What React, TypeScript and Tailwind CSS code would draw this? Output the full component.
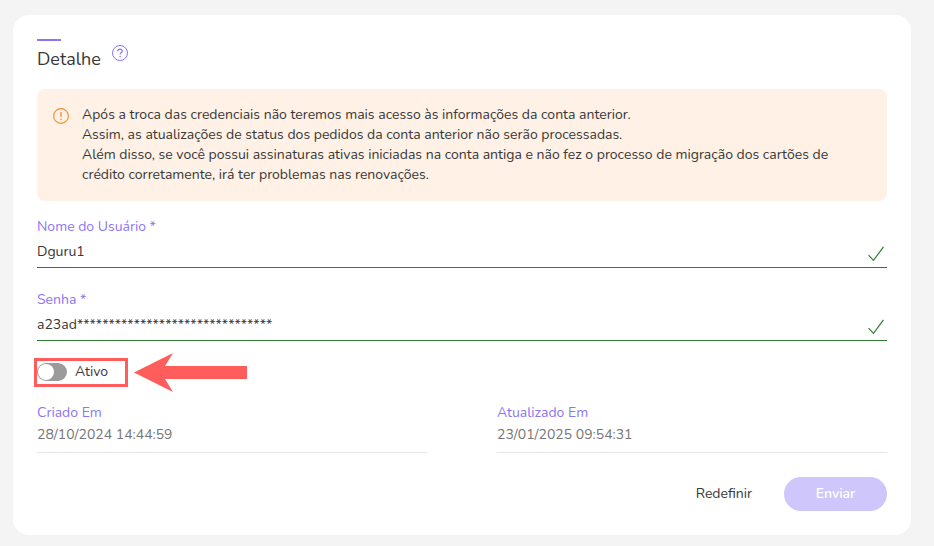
import { useState } from 'react';

interface TextFieldProps {
  id: string;
  label: string;
  value: string;
  onChange: (value: string) => void;
}

function CheckMark() {
  return (
    <svg className="h-4 w-4 shrink-0" viewBox="0 0 16 16" fill="none" stroke="#2e7d32" aria-hidden="true">
      <path d="M0.5 9.2L5.5 14.4L15.5 0.8" strokeWidth="1.2" />
    </svg>
  );
}

function TextField({ id, label, value, onChange }: TextFieldProps) {
  return (
    <div className="border-b border-[#2e7d32]">
      <label htmlFor={id} className="block leading-5 text-[#8c75f5]">
        {label} *
      </label>
      <div className="flex items-end gap-3 pt-[5px] pr-[3px] pb-[5px]">
        <input
          id={id}
          type="text"
          required
          value={value}
          onChange={(e) => onChange(e.target.value)}
          className="h-5 min-w-0 flex-1 bg-transparent leading-5 text-[#383838] outline-none"
        />
        <CheckMark />
      </div>
    </div>
  );
}

function DateField({ label, value }: { label: string; value: string }) {
  return (
    <div className="border-b border-[#e6e6e6] pb-[7px]">
      <dt className="leading-5 text-[#8c75f5]">{label}</dt>
      <dd className="pt-[2px] leading-5 text-[#757575]">{value}</dd>
    </div>
  );
}

export default function App() {
  const [username, setUsername] = useState('Dguru1');
  const [password, setPassword] = useState('a23ad*******************************');
  const [active, setActive] = useState(false);

  return (
    <main className="min-h-screen bg-[#f4f4f4] pt-[15px] pr-[23px] pb-[11px] pl-[13px] font-['Nunito','Lato',sans-serif] text-sm text-[#383838]">
      <section className="rounded-2xl bg-white p-6">
        <div className="h-[2px] w-6 bg-[#8c75f5]" />
        <div className="flex h-8 items-start gap-[11px] pt-1">
          <h1 className="pt-[2px] text-lg leading-6">Detalhe</h1>
          <button type="button" aria-label="Ajuda" className="text-[#8c75f5]">
            <svg className="h-4 w-4" viewBox="0 0 16 16" fill="none" stroke="currentColor">
              <circle cx="8" cy="8" r="7.5" />
              <path d="M5.7 6.3C5.7 5 6.7 4.2 8 4.2s2.3.8 2.3 2c0 1.6-2.2 1.6-2.2 3.3" strokeWidth="1.2" />
              <circle cx="8.1" cy="11.6" r="0.8" fill="currentColor" stroke="none" />
            </svg>
          </button>
        </div>

        <div role="alert" className="mt-4 flex gap-[13px] rounded-lg bg-[#fff1e5] p-4">
          <svg className="mt-[3px] h-4 w-4 shrink-0" viewBox="0 0 16 16" fill="none" stroke="#f08c2e" aria-hidden="true">
            <circle cx="8" cy="8" r="7.4" strokeWidth="1.1" />
            <path d="M8 4v5" strokeWidth="1.3" />
            <circle cx="8" cy="11.3" r="0.8" fill="#f08c2e" stroke="none" />
          </svg>
          <p className="pr-8 leading-5">
            Após a troca das credenciais não teremos mais acesso às informações da conta anterior.
            <br />
            Assim, as atualizações de status dos pedidos da conta anterior não serão processadas.
            <br />
            Além disso, se você possui assinaturas ativas iniciadas na conta antiga e não fez o processo de migração dos
            cartões de crédito corretamente, irá ter problemas nas renovações.
          </p>
        </div>

        <form onSubmit={(e) => e.preventDefault()}>
          <div className="flex flex-col gap-[22px] pt-4">
            <TextField id="username" label="Nome do Usuário" value={username} onChange={setUsername} />
            <TextField id="password" label="Senha" value={password} onChange={setPassword} />
          </div>

          <div className="mt-3 flex items-center gap-[6px]">
            <label className="-ml-[3px] flex h-[29px] w-[94px] items-center gap-2 border-3 border-[#ff5c5c] pb-px">
              <input
                type="checkbox"
                role="switch"
                checked={active}
                onChange={(e) => setActive(e.target.checked)}
                className="h-[18px] w-[30px] appearance-none rounded-full bg-[#9b9b9b] p-px before:block before:h-4 before:w-4 before:rounded-full before:bg-white checked:bg-[#8c75f5] checked:before:translate-x-3"
              />
              Ativo
            </label>
            <svg className="h-[39px] w-[113px]" viewBox="0 0 113 39" aria-hidden="true">
              <path d="M0 19.5L39 0L31 13H113V26H31L39 39Z" fill="#ff5c5c" />
            </svg>
          </div>

          <dl className="grid grid-cols-2 gap-[70px] pt-[11px]">
            <DateField label="Criado Em" value="28/10/2024 14:44:59" />
            <DateField label="Atualizado Em" value="23/01/2025 09:54:31" />
          </dl>

          <div className="flex items-center justify-end gap-8 pt-6">
            <button
              type="button"
              onClick={() => {
                setUsername('Dguru1');
                setPassword('a23ad*******************************');
                setActive(false);
              }}
            >
              Redefinir
            </button>
            <button type="submit" disabled className="h-[34px] w-[103px] rounded-full bg-[#cfc6fb] font-semibold text-white">
              Enviar
            </button>
          </div>
        </form>
      </section>
    </main>
  );
}
